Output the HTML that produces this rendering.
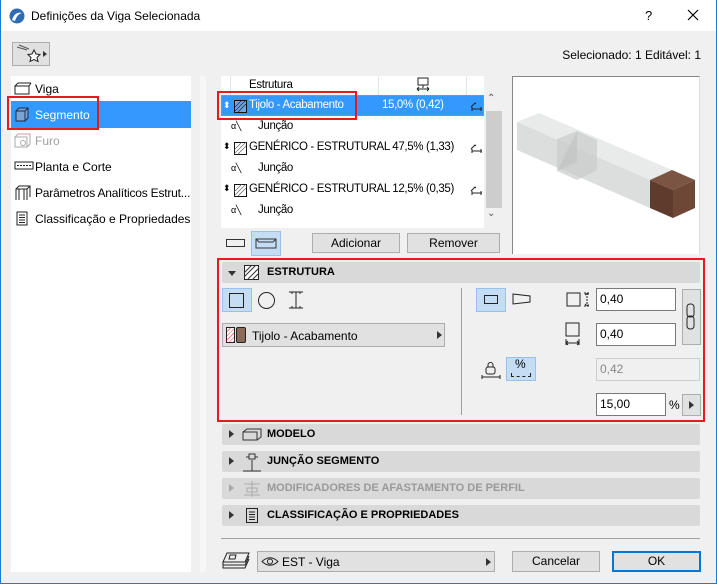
<!DOCTYPE html>
<html><head><meta charset="utf-8"><style>
*{box-sizing:border-box;margin:0;padding:0}
body{width:717px;height:584px;overflow:hidden;background:#f0f0f0;font-family:"Liberation Sans",sans-serif;font-size:12px;color:#000;position:relative}
.a{position:absolute}
.win{left:0;top:0;width:717px;height:584px;border:1px solid #1a7ad4;border-top:none}
.title{left:1px;top:0;width:715px;height:31px;background:#fff}
.btn{background:#e1e1e1;border:1px solid #adadad;text-align:center;line-height:18px}
.inp{background:#fff;border:1px solid #7a7a7a;padding-left:3px;line-height:20px}
.sec{left:222px;width:478px;height:21px;background:#d9d9d9;border-radius:2px;font-weight:bold;font-size:11px;line-height:21px}
.tri{width:0;height:0;border-top:4px solid transparent;border-bottom:4px solid transparent;border-left:5px solid #333}
.row{left:222px;width:262px;height:21px;line-height:21px}
.lst{font-size:11.5px;letter-spacing:-0.35px}
</style></head><body>
<div class="a win"></div>
<div class="a title"></div>
<svg class="a" style="left:9px;top:8px" width="16" height="16"><circle cx="8" cy="8" r="7.5" fill="#2e6db4"/><path d="M3 12 Q6 3 13 5 Q8 6 6 13Z" fill="#fff"/></svg>
<div class="a" style="left:31px;top:9px;font-size:12px">Definições da Viga Selecionada</div>
<div class="a" style="left:645px;top:8px;font-size:13px">?</div>
<svg class="a" style="left:687px;top:9px" width="12" height="12"><path d="M1 1L11 11M11 1L1 11" stroke="#000" stroke-width="1.2"/></svg>

<div class="a btn" style="left:12px;top:42px;width:38px;height:24px"></div>
<svg class="a" style="left:15px;top:44px" width="34" height="20"><path d="M2 3L12 6M4 1L14 5" stroke="#555" fill="none"/><path d="M19 6l2 4 4 .5-3 3 1 4-4-2-4 2 1-4-3-3 4-.5z" fill="#fff" stroke="#222"/><path d="M28 7l4 3-4 3z" fill="#333"/></svg>
<div class="a" style="right:16px;top:48px">Selecionado: 1 Editável: 1</div>

<!-- left panel -->
<div class="a" style="left:11px;top:76px;width:180px;height:496px;background:#fff"></div>
<div class="a" style="left:200px;top:76px;width:6px;height:496px;background:#f7f7f7"></div>
<div class="a" style="left:11px;top:101px;width:180px;height:27px;background:#3399ff"></div>
<div class="a" style="left:7px;top:96px;width:92px;height:34px;border:2px solid #e8191f"></div>
<svg class="a" style="left:14px;top:82px" width="18" height="14"><rect x="1" y="4" width="14" height="8" fill="none" stroke="#222"/><path d="M1 4l3-3h13M15 4l2-3" stroke="#222" fill="none"/></svg>
<div class="a" style="left:35px;top:82px">Viga</div>
<svg class="a" style="left:14px;top:107px" width="16" height="16"><path d="M2 4h9v10H2zM2 4l3-3h9v10l-3 3M11 4l3-3" fill="#7aa4d4" stroke="#1a2a4a"/></svg>
<div class="a" style="left:35px;top:108px;color:#fff">Segmento</div>
<svg class="a" style="left:14px;top:133px" width="18" height="16"><path d="M1 4h12v10H1zM1 4l3-3h12v10l-3 3" fill="none" stroke="#aaa"/><circle cx="9" cy="10" r="2.5" fill="none" stroke="#aaa"/></svg>
<div class="a" style="left:35px;top:134px;color:#a0a0a0">Furo</div>
<svg class="a" style="left:14px;top:161px" width="20" height="10"><rect x="1" y="1" width="18" height="7" fill="none" stroke="#222"/><path d="M3 4.5h14" stroke="#222" stroke-dasharray="2 1"/></svg>
<div class="a" style="left:35px;top:160px">Planta e Corte</div>
<svg class="a" style="left:15px;top:185px" width="16" height="16"><path d="M1 15V4l3-3h11v11M1 4h11v11M12 4l3-3M4 4v11M9 4v11" fill="none" stroke="#222"/></svg>
<div class="a" style="left:35px;top:186px;letter-spacing:-0.2px">Parâmetros Analíticos Estrut...</div>
<svg class="a" style="left:16px;top:211px" width="12" height="15"><rect x="1" y="1" width="10" height="13" fill="none" stroke="#222"/><path d="M3 4h6M3 6.5h6M3 9h6M3 11.5h6" stroke="#222"/></svg>
<div class="a" style="left:35px;top:212px">Classificação e Propriedades</div>

<!-- list -->
<div class="a" style="left:221px;top:76px;width:263px;height:152px;background:#fff;overflow:hidden"></div>
<div class="a" style="left:230px;top:76px;width:1px;height:19px;background:#e5e5e5"></div>
<div class="a" style="left:378px;top:76px;width:1px;height:19px;background:#e5e5e5"></div>
<div class="a" style="left:466px;top:76px;width:1px;height:19px;background:#e5e5e5"></div>
<div class="a lst" style="left:249px;top:79px">Estrutura</div>
<svg class="a" style="left:416px;top:77px" width="14" height="16"><rect x="2" y="1" width="10" height="7" fill="none" stroke="#222"/><path d="M1 12h12M1 12l2-2M1 12l2 2M13 12l-2-2M13 12l-2 2M7 8v3" stroke="#222" fill="none"/></svg>
<div class="a" style="left:221px;top:95px;width:263px;height:21px;background:#3399ff;border:1px dotted #e88b2e"></div>
<div class="a" style="left:217px;top:91px;width:140px;height:29px;border:2px solid #e8191f"></div>
<div class="a row lst" style="top:95px;color:#fff">
<span class="a" style="left:1px;font-size:9px">⬍</span>
<svg class="a" style="left:12px;top:5px" width="13" height="13"><rect x=".5" y=".5" width="12" height="12" fill="#6aa8ee" stroke="#111"/><path d="M0 8l8-8M0 12l12-12M4 12l8-8" stroke="#111" stroke-width=".6"/></svg>
<span class="a" style="left:27px">Tijolo - Acabamento</span><span class="a" style="left:160px">15,0% (0,42)</span></div>
<div class="a lst" style="left:222px;top:116px;width:262px;height:100px">
<div class="a" style="left:9px;top:5px;font-size:9px">α╲</div><div class="a" style="left:36px;top:4px">Junção</div>
<div class="a" style="left:1px;top:25px;font-size:9px">⬍</div>
<svg class="a" style="left:12px;top:26px" width="13" height="13"><rect x=".5" y=".5" width="12" height="12" fill="#fff" stroke="#111"/><path d="M0 8l8-8M0 12l12-12M4 12l8-8" stroke="#555" stroke-width=".6"/></svg>
<div class="a" style="left:27px;top:25px">GENÉRICO - ESTRUTURAL 47,5% (1,33)</div>
<div class="a" style="left:9px;top:47px;font-size:9px">α╲</div><div class="a" style="left:36px;top:46px">Junção</div>
<div class="a" style="left:1px;top:67px;font-size:9px">⬍</div>
<svg class="a" style="left:12px;top:68px" width="13" height="13"><rect x=".5" y=".5" width="12" height="12" fill="#fff" stroke="#111"/><path d="M0 8l8-8M0 12l12-12M4 12l8-8" stroke="#555" stroke-width=".6"/></svg>
<div class="a" style="left:27px;top:67px">GENÉRICO - ESTRUTURAL 12,5% (0,35)</div>
<div class="a" style="left:9px;top:89px;font-size:9px">α╲</div><div class="a" style="left:36px;top:88px">Junção</div>
</div>
<svg class="a" style="left:468px;top:97px" width="14" height="126"><g stroke="#222" fill="none"><path d="M3 10l4-4 1 1M4 12h10M4 10v4M13 10v4"/><path d="M3 52l4-4 1 1M4 54h10M4 52v4M13 52v4"/><path d="M3 94l4-4 1 1M4 96h10M4 94v4M13 94v4"/></g></svg>
<div class="a" style="left:486px;top:111px;width:16px;height:97px;background:#cdcdcd"></div>
<div class="a" style="left:487px;top:93px;font-size:10px;color:#555">⌃</div>
<div class="a" style="left:487px;top:208px;font-size:10px;color:#555">⌄</div>

<div class="a" style="left:226px;top:239px;width:19px;height:8px;border:1px solid #333"></div>
<div class="a" style="left:251px;top:231px;width:30px;height:25px;background:#c4ddf5;border:1px solid #99c2ea"></div>
<svg class="a" style="left:255px;top:236px" width="22" height="14"><path d="M1 3h20v9H1zM1 3l3 3h14l3-3" fill="none" stroke="#333"/></svg>
<div class="a btn" style="left:312px;top:233px;width:88px;height:20px">Adicionar</div>
<div class="a btn" style="left:407px;top:233px;width:93px;height:20px">Remover</div>

<!-- preview -->
<div class="a" style="left:512px;top:76px;width:188px;height:178px;background:#fff;border-top:1px solid #888;border-left:1px solid #888;border-right:1px solid #ddd"></div>
<svg class="a" style="left:513px;top:77px" width="186" height="176">
<polygon points="4,45 26,36 159,93 137,103" fill="#e9eaea"/>
<polygon points="4,45 137,103 137,131 4,73" fill="#dcdddd"/>
<polygon points="44,62 64,54 84,63 84,93 64,103 44,94" fill="#c9caca" opacity=".7"/>
<polygon points="64,54 64,85 44,94" fill="#bdbebe" opacity=".5"/>
<polygon points="137,103 159,93 182,103 160,113" fill="#7b5444"/>
<polygon points="137,103 160,113 160,141 137,131" fill="#5e3b2d"/>
<polygon points="160,113 182,103 182,131 160,141" fill="#6f4736"/>
</svg>

<!-- estrutura -->
<div class="a" style="left:217px;top:258px;width:488px;height:164px;border:2px solid #e8191f"></div>
<div class="a sec" style="top:262px"><div class="a" style="left:6px;top:9px;width:0;height:0;border-left:4px solid transparent;border-right:4px solid transparent;border-top:5px solid #333"></div>
<svg class="a" style="left:22px;top:3px" width="15" height="15"><rect x=".5" y=".5" width="14" height="14" fill="#fff" stroke="#222"/><path d="M0 8l8-8M0 12l12-12M3 15l12-12M8 15l7-7" stroke="#333"/></svg>
<span class="a" style="left:45px">ESTRUTURA</span></div>
<div class="a" style="left:222px;top:288px;width:30px;height:24px;background:#c4ddf5;border:1px solid #99c2ea"></div>
<div class="a" style="left:229px;top:293px;width:15px;height:15px;border:1px solid #222"></div>
<div class="a" style="left:258px;top:292px;width:17px;height:17px;border:1px solid #222;border-radius:50%"></div>
<svg class="a" style="left:288px;top:291px" width="16" height="18"><path d="M1 1h14M1 17h14M8 1v16M4 1v2M12 1v2M4 17v-2M12 17v-2" stroke="#222" fill="none"/></svg>
<div class="a btn" style="left:222px;top:323px;width:223px;height:24px;text-align:left"></div>
<div class="a" style="left:226px;top:327px;width:9px;height:16px;border:1px solid #222;background:repeating-linear-gradient(135deg,#fff 0 2px,#f08080 2px 3px)"></div>
<div class="a" style="left:236px;top:327px;width:10px;height:16px;border:1px solid #222;background:#8c6a5a;border-radius:2px"></div>
<div class="a" style="left:252px;top:329px">Tijolo - Acabamento</div>
<div class="a tri" style="left:437px;top:331px"></div>
<div class="a" style="left:461px;top:288px;width:1px;height:127px;background:#a0a0a0"></div>
<div class="a" style="left:476px;top:288px;width:30px;height:24px;background:#c4ddf5;border:1px solid #99c2ea"></div>
<div class="a" style="left:484px;top:295px;width:14px;height:9px;border:1px solid #222"></div>
<svg class="a" style="left:512px;top:293px" width="20" height="12"><path d="M1 1L18 3V9L1 11Z" fill="none" stroke="#222"/></svg>
<svg class="a" style="left:566px;top:289px" width="28" height="22"><rect x="1" y="4" width="13" height="13" fill="none" stroke="#222"/><path d="M18 4h6M18 17h6M21 4v13M19 6l2-2 2 2M19 15l2 2 2-2" stroke="#222" fill="none" stroke-dasharray="2 1"/></svg>
<svg class="a" style="left:565px;top:322px" width="18" height="26"><rect x="1" y="1" width="13" height="13" fill="none" stroke="#222"/><path d="M1 17v6M14 17v6M1 21h13M3 19l-2 2 2 2M12 19l2 2-2 2" stroke="#222" fill="none"/></svg>
<div class="a inp" style="left:596px;top:288px;width:80px;height:23px">0,40</div>
<div class="a inp" style="left:596px;top:323px;width:80px;height:23px">0,40</div>
<div class="a btn" style="left:682px;top:289px;width:19px;height:56px"></div>
<svg class="a" style="left:684px;top:303px" width="14" height="28"><rect x="3" y="1" width="7" height="13" rx="3" fill="none" stroke="#222"/><rect x="3" y="13" width="7" height="13" rx="3" fill="none" stroke="#222"/></svg>
<svg class="a" style="left:481px;top:360px" width="20" height="20"><rect x="5" y="7" width="9" height="7" rx="2" fill="none" stroke="#222"/><path d="M7 7V5a2.5 2.5 0 015 0v2M1 17h18M1 15v4M19 15v4" stroke="#222" fill="none"/></svg>
<div class="a" style="left:506px;top:357px;width:30px;height:24px;background:#c4ddf5;border:1px solid #99c2ea"></div>
<div class="a" style="left:515px;top:357px;font-size:12px">%</div>
<div class="a" style="left:511px;top:373px;width:20px;height:4px;border:1px dashed #222;border-top:none"></div>
<div class="a inp" style="left:596px;top:358px;width:104px;height:23px;background:#f0f0f0;border-color:#ccc;color:#888">0,42</div>
<div class="a inp" style="left:596px;top:393px;width:70px;height:23px">15,00</div>
<div class="a" style="left:669px;top:398px">%</div>
<div class="a btn" style="left:682px;top:394px;width:19px;height:22px"></div>
<div class="a tri" style="left:689px;top:401px"></div>

<div class="a sec" style="top:424px"><div class="a tri" style="left:7px;top:6px"></div>
<svg class="a" style="left:20px;top:4px" width="20" height="14"><path d="M1 4h14v8H1zM1 4l4-3h14v8l-4 3" fill="none" stroke="#333"/></svg><span class="a" style="left:45px">MODELO</span></div>
<div class="a sec" style="top:451px"><div class="a tri" style="left:7px;top:6px"></div>
<svg class="a" style="left:20px;top:1px" width="20" height="20"><path d="M1 19h18M10 8v11M4 5h3M13 5h3M7 2h6v5H7z" stroke="#333" fill="none"/></svg><span class="a" style="left:45px">JUNÇÃO SEGMENTO</span></div>
<div class="a sec" style="top:478px;color:#999"><div class="a tri" style="left:7px;top:6px;border-left-color:#aaa"></div>
<svg class="a" style="left:21px;top:2px" width="18" height="18"><path d="M1 4h16M1 15h16M9 1v16M4 8h10v4H4z" stroke="#aaa" fill="none"/></svg><span class="a" style="left:45px">MODIFICADORES DE AFASTAMENTO DE PERFIL</span></div>
<div class="a sec" style="top:505px"><div class="a tri" style="left:7px;top:6px"></div>
<svg class="a" style="left:24px;top:3px" width="12" height="15"><rect x=".5" y=".5" width="11" height="14" fill="none" stroke="#222"/><path d="M3 4h6M3 6.5h6M3 9h6M3 11.5h6" stroke="#222"/></svg><span class="a" style="left:45px">CLASSIFICAÇÃO E PROPRIEDADES</span></div>

<div class="a" style="left:221px;top:538px;width:479px;height:1px;background:#a0a0a0"></div>
<svg class="a" style="left:222px;top:551px" width="28" height="20"><path d="M5 2h22l-4 9H1zM1 11v3h22l4-9M1 14v3h22l4-9M8 4h6l-1 4H7z" fill="none" stroke="#222"/></svg>
<div class="a btn" style="left:257px;top:551px;width:238px;height:21px"></div>
<svg class="a" style="left:261px;top:556px" width="18" height="11"><path d="M1 5.5Q9 -2 17 5.5Q9 13 1 5.5Z" fill="none" stroke="#222"/><circle cx="9" cy="5.5" r="2.5" fill="none" stroke="#222"/></svg>
<div class="a" style="left:282px;top:555px">EST - Viga</div>
<div class="a tri" style="left:486px;top:558px"></div>
<div class="a btn" style="left:512px;top:551px;width:88px;height:21px;line-height:19px">Cancelar</div>
<div class="a btn" style="left:612px;top:551px;width:89px;height:21px;border:2px solid #0078d7;line-height:17px">OK</div>
</body></html>
